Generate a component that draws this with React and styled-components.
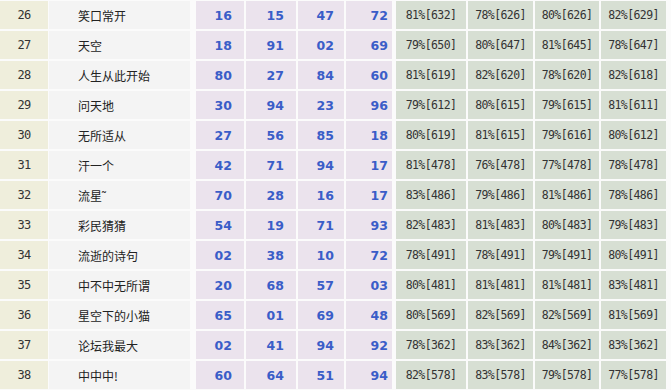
import React from "react";
import styled, { createGlobalStyle } from "styled-components";

const GlobalStyle = createGlobalStyle`
  html, body {
    margin: 0;
    padding: 0;
    background: #fafafa;
    overflow: hidden;
  }
`;

const rows = [
  [26, "笑口常开", ["16", "15", "47", "72"], ["81%[632]", "78%[626]", "80%[626]", "82%[629]"]],
  [27, "天空", ["18", "91", "02", "69"], ["79%[650]", "80%[647]", "81%[645]", "78%[647]"]],
  [28, "人生从此开始", ["80", "27", "84", "60"], ["81%[619]", "82%[620]", "78%[620]", "82%[618]"]],
  [29, "问天地", ["30", "94", "23", "96"], ["79%[612]", "80%[615]", "79%[615]", "81%[611]"]],
  [30, "无所适从", ["27", "56", "85", "18"], ["80%[619]", "81%[615]", "79%[616]", "80%[612]"]],
  [31, "汗一个", ["42", "71", "94", "17"], ["81%[478]", "76%[478]", "77%[478]", "78%[478]"]],
  [32, "流星˜", ["70", "28", "16", "17"], ["83%[486]", "79%[486]", "81%[486]", "78%[486]"]],
  [33, "彩民猜猜", ["54", "19", "71", "93"], ["82%[483]", "81%[483]", "80%[483]", "79%[483]"]],
  [34, "流逝的诗句", ["02", "38", "10", "72"], ["78%[491]", "78%[491]", "79%[491]", "80%[491]"]],
  [35, "中不中无所谓", ["20", "68", "57", "03"], ["80%[481]", "81%[481]", "81%[481]", "83%[481]"]],
  [36, "星空下的小猫", ["65", "01", "69", "48"], ["80%[569]", "82%[569]", "82%[569]", "81%[569]"]],
  [37, "论坛我最大", ["02", "41", "94", "92"], ["78%[362]", "83%[362]", "84%[362]", "83%[362]"]],
  [38, "中中中!", ["60", "64", "51", "94"], ["82%[578]", "83%[578]", "79%[578]", "77%[578]"]],
];

const numPads = [12, 12, 10, 4];

const Table = styled.div`
  display: flex;
  flex-direction: column;
  gap: 2px;
  width: 671px;
  padding-top: 1px;
  background: #fbfbfb;
`;

const Row = styled.div`
  display: grid;
  grid-template-columns: 47px 145px 48px 50px 46px 48px 70px 65px 64px 65px;
  height: 28px;
  column-gap: 2px;
`;

const IndexCell = styled.div`
  display: flex;
  align-items: center;
  justify-content: center;
  background: #efeedc;
  color: #333;
  font-family: "DejaVu Sans Mono", monospace;
  font-size: 12px;
  letter-spacing: -0.6px;
  margin-right: -1px;
`;

const NameCell = styled.div`
  display: flex;
  align-items: center;
  padding-left: 29px;
  background: #f4f4f4;
  color: #222;
  font-family: "Noto Sans CJK SC", sans-serif;
  font-size: 12px;
  margin-right: 4px;
`;

const NumCell = styled.div`
  display: flex;
  align-items: center;
  justify-content: flex-end;
  padding-right: ${(p) => p.$pad}px;
  background: #ebe3ed;
  color: #3a5dc8;
  font-family: "DejaVu Sans", sans-serif;
  font-weight: bold;
  font-size: 12.5px;
  ${(p) => p.$last && "margin-right: 2px;"}
`;

const RateCell = styled.div`
  display: flex;
  align-items: center;
  justify-content: center;
  background: #d7dfd3;
  color: #333;
  font-family: "DejaVu Sans Mono", monospace;
  font-size: 11.5px;
  letter-spacing: -0.6px;
`;

export default function App() {
  return (
    <>
      <GlobalStyle />
      <Table>
        {rows.map(([idx, name, nums, rates]) => (
          <Row key={idx}>
            <IndexCell>{idx}</IndexCell>
            <NameCell>{name}</NameCell>
            {nums.map((n, i) => (
              <NumCell key={i} $pad={numPads[i]} $last={i === 3}>
                {n}
              </NumCell>
            ))}
            {rates.map((r, i) => (
              <RateCell key={i}>{r}</RateCell>
            ))}
          </Row>
        ))}
      </Table>
    </>
  );
}
